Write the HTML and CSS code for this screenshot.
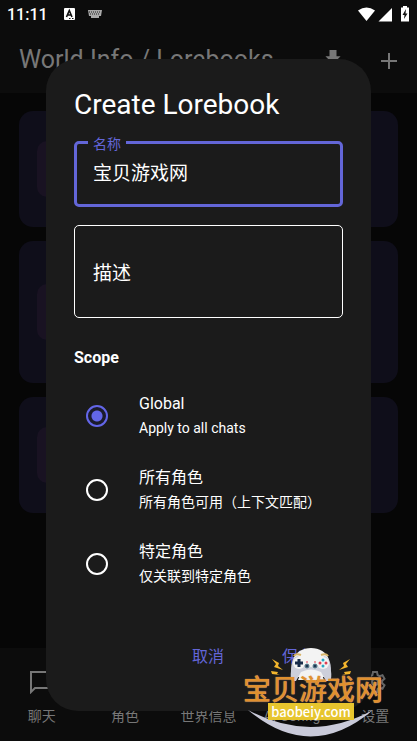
FILE: index.html
```html
<!DOCTYPE html>
<html lang="zh-CN">
<head>
<meta charset="UTF-8">
<meta name="viewport" content="width=device-width, initial-scale=1.0">
<title>World Info / Lorebooks</title>
<link rel="stylesheet" href="styles.css">
</head>
<body>
<div class="app">
  <div class="status-bar">
    <span class="time">11:11</span>
    <svg class="status-a" width="12" height="12" viewBox="0 0 12 12">
      <rect width="11" height="12" rx="1" fill="#fff"/>
      <path d="M2.5 9L5.300 2.500L8 9M3.500 7H7" fill="none" stroke="#111" stroke-width="1.600"/>
      <path d="M5 10.500H6.500M8 10.500H9.500" stroke="#111"/>
    </svg>
    <svg class="status-keys" width="14" height="8" viewBox="0 0 14 8">
      <path d="M0 0H14L13 6H11V8H3V6H1Z" fill="#aaa"/>
      <path d="M1 2H13M2 4H12" stroke="#222" stroke-dasharray="1 1"/>
    </svg>
    <span class="spacer"></span>
    <svg width="54" height="17" viewBox="0 0 54 17" fill="#fff">
      <path d="M3 4.500Q11.500 -1.500 20 4.500L11.500 15Z"/>
      <path d="M37 2V15.500H23.500Z"/>
      <path d="M48 1.500V0H52V1.500H54V15.500H46V1.500Z"/>
      <path d="M51 3L47.500 9H49.500L49 13L52.500 7.500H50.500Z" fill="#111"/>
    </svg>
  </div>

  <header class="top-bar">
    <h1>World Info / Lorebooks</h1>
    <button class="icon-button" aria-label="Import">
      <svg width="28" height="28" viewBox="0 0 24 24" fill="#777"><path d="M18.500 8h-3.500V2.500H9v5.500H5.500l6.500 6.500zM5 18v2h14v-2z"/></svg>
    </button>
    <button class="icon-button" aria-label="Add">
      <svg width="16" height="16" viewBox="0 0 16 16" fill="#777"><path d="M7 0h2v7h7v2H9v7H7V9H0V7h7z"/></svg>
    </button>
  </header>

  <main class="books">
    <div class="book"><span class="book-icon"></span></div>
    <div class="book tall"><span class="book-icon"></span></div>
    <div class="book"><span class="book-icon"></span></div>
  </main>

  <nav class="bottom-nav">
    <a href="#"><svg width="24" height="24" viewBox="0 0 24 24"><path d="M1 2H23V18H5L1 22Z" fill="none" stroke="#777" stroke-width="2"/></svg>聊天</a>
    <a href="#"><span class="nav-space"></span>角色</a>
    <a href="#"><span class="nav-space"></span>世界信息</a>
    <a href="#"><span class="nav-space"></span>AI Config</a>
    <a href="#"><svg width="24" height="24" viewBox="0 0 24 24" fill="none" stroke="#666" stroke-width="2"><path d="M10 2h4l.6 3 2 1.200 2.900-1 2 3.500-2.300 2v2.600l2.300 2-2 3.500-2.900-1-2 1.200-.6 3h-4l-.6-3-2-1.200-2.900 1-2-3.500 2.300-2v-2.600l-2.300-2 2-3.500 2.900 1 2-1.200z"/><circle cx="12" cy="12" r="3"/></svg>设置</a>
  </nav>
</div>

<div class="overlay">
  <form class="dialog" role="dialog" aria-labelledby="dialog-title">
    <h2 id="dialog-title">Create Lorebook</h2>
    <fieldset class="name-field">
      <legend><label for="name">名称</label></legend>
      <input type="text" id="name" value="宝贝游戏网">
    </fieldset>
    <textarea class="description" aria-label="描述" placeholder="描述"></textarea>
    <h3>Scope</h3>
    <div class="scopes">
      <label class="scope">
        <input type="radio" name="scope" checked>
        <span><b>Global</b><small>Apply to all chats</small></span>
      </label>
      <label class="scope">
        <input type="radio" name="scope">
        <span><b>所有角色</b><small>所有角色可用（上下文匹配）</small></span>
      </label>
      <label class="scope">
        <input type="radio" name="scope">
        <span><b>特定角色</b><small>仅关联到特定角色</small></span>
      </label>
    </div>
    <div class="actions">
      <button type="button">取消</button>
      <button type="button">保存</button>
    </div>
  </form>
</div>

<div class="watermark">
  <svg width="144" height="94" viewBox="0 0 144 94">
    <path d="M7 63Q69.500 97 132 63Q69.500 116 7 63Z" fill="#c9cad9"/>
    <g fill="#f4b62d">
      <path d="M31 12L38 16L37 19L42 23L33 20L35 17ZM30 24L37 25L36 27L39 28L31 27Z"/>
      <path d="M109 12L102 16L103 19L98 23L107 20L105 17ZM110 24L103 25L104 27L101 28L109 27Z"/>
    </g>
    <path d="M52 13C56 -3 84 -3 88 13L86 30H54Z" fill="#f3f3f3"/>
    <path d="M57 9Q50 10 50 24Q49 31 51 34H55L60 25Q70 20 80 25L85 34H89Q91 31 90 24Q90 10 83 9L78 17Q70 23 62 17Z" fill="#cdcfdb"/>
    <path d="M57 33Q59 24 70 23Q81 24 83 33Z" fill="#f3f3f3"/>
    <path d="M53 9Q55 6 60 8M87 9Q85 6 80 8" fill="none" stroke="#d8b56a" stroke-width="2"/>
    <circle cx="58" cy="16" r="6" fill="#f3f3f3"/><circle cx="82" cy="16" r="6" fill="#f3f3f3"/>
    <path d="M58 12V20M54 16H62" stroke="#172b49" stroke-width="3"/>
    <g fill="#dc3e53"><circle cx="79" cy="16" r="1.500"/><circle cx="85" cy="16" r="1.500"/></g>
    <g fill="#27a8c4"><circle cx="82" cy="13" r="1.500"/><circle cx="82" cy="19" r="1.500"/></g>
    <g fill="#213653" stroke="#58808f"><circle cx="66" cy="19" r="2"/><circle cx="74" cy="19" r="2"/></g>
    <path d="M65 15H67M73 15H75" stroke="#dc3e53"/>
  </svg>
  <strong>宝贝游戏网</strong>
  <span>baobeiy.com</span>
</div>
</body>
</html>
```

FILE: styles.css
```css
* {
  box-sizing: border-box;
}

body {
  margin: 0;
  background: #060606;
  color: #fff;
  font-family: Roboto, "Noto Sans CJK SC", sans-serif;
}

button, input, textarea {
  font-family: inherit;
  color: inherit;
}

button {
  border: 0;
  padding: 0;
  background: none;
}

.app {
  min-height: 100vh;
  display: flex;
  flex-direction: column;
}

.status-bar {
  height: 28px;
  padding: 0 8px 0 7px;
  display: flex;
  align-items: center;
  background: #0c0c0c;
}

.time {
  font-size: 16px;
  font-weight: 500;
  width: 57px;
}

.status-keys {
  margin-left: 12px;
}

.spacer {
  flex: 1;
}

.top-bar {
  height: 65px;
  padding: 0 20px 0 19px;
  display: flex;
  align-items: center;
  background: #0c0c0c;
}

.top-bar h1 {
  flex: 1;
  margin: 0 0 2px;
  font-size: 25px;
  font-weight: 400;
  color: #777;
  white-space: nowrap;
}

.icon-button {
  display: flex;
  margin-left: 34px;
}

.books {
  flex: 1;
  padding: 18px 19px;
  display: flex;
  flex-direction: column;
  gap: 14px;
}

.book {
  height: 116px;
  padding-left: 18px;
  display: flex;
  align-items: center;
  border-radius: 14px;
  background: #0f0e1a;
}

.book.tall {
  height: 142px;
}

.book-icon {
  width: 56px;
  height: 56px;
  border-radius: 10px;
  background: #191222;
}

.bottom-nav {
  height: 93px;
  padding-top: 22px;
  display: flex;
  background: #0c0c0c;
}

.bottom-nav a {
  flex: 1;
  display: flex;
  flex-direction: column;
  align-items: center;
  gap: 12px;
  color: #777;
  font-size: 14px;
  line-height: 20px;
  text-decoration: none;
  white-space: nowrap;
}

.nav-space {
  height: 24px;
}

.overlay {
  position: absolute;
  inset: 0;
  padding: 28px 46px 0;
  display: flex;
  align-items: center;
}

.dialog {
  width: 100%;
  padding: 28px 28px 40px;
  border-radius: 32px;
  background: #1b1b1b;
}

h2 {
  margin: 0 0 10px;
  font-size: 28px;
  font-weight: 400;
  line-height: 36px;
}

.name-field {
  margin: 0 0 18px;
  padding: 0 16px;
  border: 3px solid #6366d8;
  border-radius: 5px;
}

.name-field legend {
  margin-left: -5px;
  padding: 3px 5px 0;
  color: #6366d8;
  font-size: 14px;
  line-height: 16px;
}

.name-field input {
  display: block;
  width: 100%;
  height: 52px;
  padding: 0 0 12px;
  border: 0;
  outline: 0;
  background: none;
  font-size: 19px;
}

.description {
  display: block;
  width: 100%;
  height: 93px;
  padding: 34px 18px;
  border: 1px solid #fff;
  border-radius: 5px;
  background: none;
  font-size: 19px;
  line-height: 28px;
  resize: none;
}

.description::placeholder {
  color: #fff;
}

h3 {
  margin: 28px 0 9px;
  font-size: 16px;
  font-weight: 700;
  line-height: 24px;
}

.scope {
  height: 74px;
  padding-left: 12px;
  display: flex;
  align-items: center;
  gap: 31px;
}

.scope input {
  appearance: none;
  width: 22px;
  height: 22px;
  margin: 0;
  border: 2px solid #fff;
  border-radius: 50%;
}

.scope input:checked {
  border-color: #6366e8;
  background: radial-gradient(circle, #6366e8 5px, #1b1b2c 6px);
}

.scope b, .scope small {
  display: block;
  font-size: 14px;
  font-weight: 400;
  line-height: 24px;
  white-space: nowrap;
}

.scope b {
  font-size: 16px;
}

.actions {
  margin-top: 42px;
  padding-right: 29px;
  display: flex;
  justify-content: flex-end;
  gap: 58px;
}

.actions button {
  color: #6366d8;
  font-size: 16px;
  line-height: 28px;
}

/* site mark over the bottom right corner */
.watermark {
  position: absolute;
  right: 32px;
  bottom: 0;
  width: 144px;
  height: 94px;
}

.watermark svg {
  position: absolute;
  inset: 0;
}

.watermark strong {
  position: absolute;
  top: 24px;
  left: 2px;
  color: #e0902f;
  font-size: 28px;
  font-weight: 500;
  line-height: 40px;
  text-shadow: 0 0 1px #d8b090;
  white-space: nowrap;
}

.watermark span {
  position: absolute;
  top: 56px;
  left: 27px;
  width: 86px;
  background: #e7c52e;
  font-family: "Noto Sans CJK SC", sans-serif;
  font-size: 13px;
  font-weight: 500;
  line-height: 17px;
  text-align: center;
}
```
